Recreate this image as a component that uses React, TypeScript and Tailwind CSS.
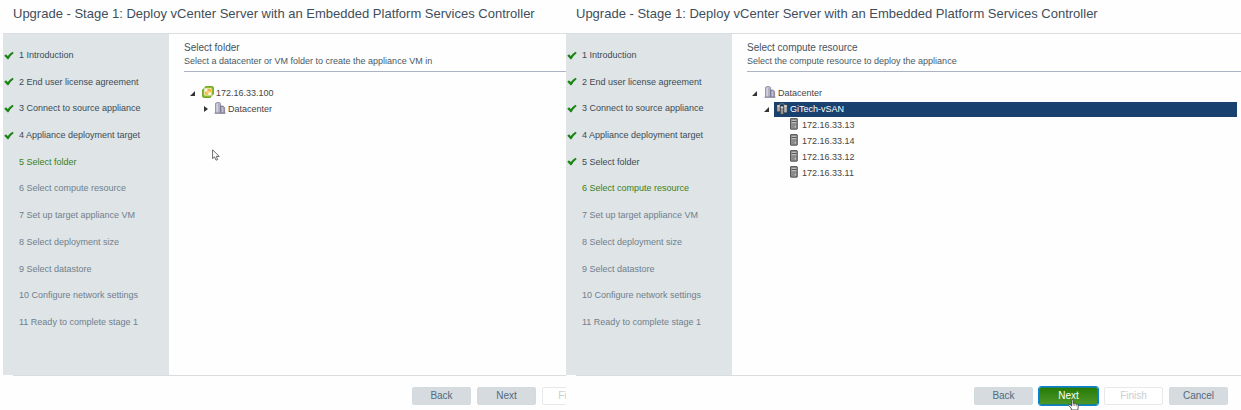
import React from 'react';
import clsx from 'clsx';

const steps = [
  'Introduction',
  'End user license agreement',
  'Connect to source appliance',
  'Appliance deployment target',
  'Select folder',
  'Select compute resource',
  'Set up target appliance VM',
  'Select deployment size',
  'Select datastore',
  'Configure network settings',
  'Ready to complete stage 1',
];

const hosts = ['172.16.33.13', '172.16.33.14', '172.16.33.12', '172.16.33.11'];

const CheckIcon = () => (
  <svg className="h-[9px] w-[10px] shrink-0" viewBox="0 0 20 18" aria-hidden="true">
    <path d="M0.5 9.5 L4 6.5 L7.5 10 Q11 5 17 1.5 L19.5 4 Q13 9 9 16.5 L7 16.5 Z" fill="#1d8516" />
  </svg>
);

const OpenArrow = () => (
  <svg className="h-[5px] w-[5px]" viewBox="0 0 5 5" aria-hidden="true">
    <path d="M5 0 V5 H0 Z" fill="#333" />
  </svg>
);

const ClosedArrow = () => (
  <svg className="ml-[2px] h-[6px] w-[5px]" viewBox="0 0 5 6" aria-hidden="true">
    <path d="M0 0 L4 3 L0 6 Z" fill="#333" />
  </svg>
);

const VCenterIcon = () => (
  <svg className="mb-[2px] h-3 w-3" viewBox="0 0 12 12" aria-hidden="true">
    <rect x="3" y="0.6" width="8.4" height="8.2" rx="1" fill="#8fbf35" stroke="#6fa023" />
    <rect x="0.6" y="3" width="8.4" height="8.4" rx="1" fill="#8abb2c" stroke="#6fa023" />
    <rect x="2.2" y="2.2" width="7.4" height="7.4" rx="0.8" fill="#fdf8e4" />
    <rect x="5.4" y="2.9" width="3.4" height="3.4" rx="0.6" fill="#f3ae2a" />
    <rect x="2.9" y="5.4" width="3.4" height="3.4" rx="0.6" fill="#f3b838" />
    <path d="M4.7 7.1 L7 4.7" stroke="#fff2c2" strokeWidth="0.8" />
  </svg>
);

const DatacenterIcon = () => (
  <svg className="mb-[2px] h-3 w-3" viewBox="0 0 12 12" aria-hidden="true">
    <path d="M1.5 11 V1.4 L2.5 0.6 H5.5 L6.5 1.4 V11 Z" fill="#bdbccf" stroke="#85849c" strokeWidth="0.8" />
    <path d="M6.5 11 V4 H9 L10.6 5.5 V11 Z" fill="#a3a2b8" stroke="#77768e" strokeWidth="0.8" />
    <path d="M3.2 2 V10.4" stroke="#e0dfeb" strokeWidth="0.9" />
    <path d="M5 2 V10.4" stroke="#a09fb6" strokeWidth="0.7" />
    <path d="M8.6 5.5 V10.4" stroke="#cfcede" strokeWidth="0.8" />
    <path d="M0.5 11.3 H11.5" stroke="#7d7c94" strokeWidth="0.8" />
  </svg>
);

const ClusterIcon = () => (
  <svg className="h-3 w-3" viewBox="0 0 12 12" aria-hidden="true">
    <rect x="0.9" y="1.8" width="3.2" height="7" fill="#a9a9a9" stroke="#2e2e2e" strokeWidth="0.5" />
    <rect x="7.9" y="1.8" width="3.2" height="8" fill="#b5b5b5" stroke="#2e2e2e" strokeWidth="0.5" />
    <rect x="4.4" y="3" width="3.2" height="8.2" fill="#969696" stroke="#2e2e2e" strokeWidth="0.5" />
    <path d="M1.4 3 H3.7 M8.3 3 H10.7 M4.8 4.3 H7.2" stroke="#f3f0e4" strokeWidth="1" />
    <path d="M3.6 1.4 L5.4 0.6 M6.6 0.6 L8.4 1.4" stroke="#c9b68d" strokeWidth="0.7" />
  </svg>
);

const HostIcon = () => (
  <svg className="mb-[2px] h-3 w-3" viewBox="0 0 12 12" aria-hidden="true">
    <rect x="2.5" y="0.6" width="6.8" height="10.6" rx="0.4" fill="#8b8b8b" stroke="#4b4b4b" strokeWidth="0.9" />
    <path d="M3.6 2.4 H8.2 M3.6 4.6 H8.2" stroke="#d0d0d0" strokeWidth="0.8" />
    <path d="M3.6 3.5 H8.2" stroke="#4c4c4c" strokeWidth="0.8" />
    <rect x="6.8" y="8.2" width="1.2" height="1.2" fill="#d8d8d8" />
  </svg>
);

type ButtonProps = {
  label: string;
  variant?: 'default' | 'primary' | 'disabled';
};

const WizardButton = ({ label, variant = 'default' }: ButtonProps) => (
  <button
    type="button"
    disabled={variant === 'disabled'}
    className={clsx(
      'h-[18px] w-[59px] shrink-0 rounded-[2px] border text-[10px] leading-4',
      variant === 'default' && 'border-[#d3dade] bg-[#d5dbdf] text-[#526a7d]',
      variant === 'primary' && 'border-[#1c7f8c] bg-linear-to-b from-[#267c04] to-[#4b9626] text-white outline outline-[#0a84d0]',
      variant === 'disabled' && 'border-[#e6e9eb] bg-white text-[#c8ced2]',
    )}
  >
    {label}
  </button>
);

const StepList = ({ current }: { current: number }) => (
  <nav className="flex w-[166px] shrink-0 flex-col bg-[#dfe4e6] pt-[13px] pb-[45px]">
    <ol className="flex flex-1 flex-col justify-between">
      {steps.map((step, i) => {
        const number = i + 1;
        return (
          <li
            key={step}
            className={clsx(
              'flex h-4 items-center gap-[5px] pl-px text-[9px] leading-4 whitespace-nowrap',
              number < current && 'text-[#3b4b57]',
              number === current && 'text-[#37801c]',
              number > current && 'text-[#6f808e]',
            )}
          >
            <span className="flex w-[10px] justify-center">{number < current && <CheckIcon />}</span>
            <a href="#">{number} {step}</a>
          </li>
        );
      })}
    </ol>
  </nav>
);

type TreeRowProps = {
  label: string;
  icon: React.ReactNode;
  arrow?: React.ReactNode;
  selected?: boolean;
};

const TreeRow = ({ label, icon, arrow, selected }: TreeRowProps) => (
  <div className="flex h-4 items-center">
    <span className="flex w-[10px] shrink-0 items-center">{arrow}</span>
    <span
      className={clsx(
        'flex h-[15px] flex-1 items-center gap-[2px] pl-[2px] text-[9px] leading-4',
        selected ? 'bg-[#19416f] text-white' : 'text-[#454545]',
      )}
    >
      {icon}
      {label}
    </span>
  </div>
);

type WizardProps = {
  current: number;
  title: string;
  description: string;
  footer: React.ReactNode;
  children: React.ReactNode;
};

const Wizard = ({ current, title, description, footer, children }: WizardProps) => (
  <section className="flex min-w-0 flex-col overflow-hidden">
    <header className="flex h-[34px] items-start border-b border-[#dcdfe1] pt-1 pl-[10px]">
      <h1 className="text-[13px] leading-5 whitespace-nowrap text-[#3f4e5b]">
        Upgrade - Stage 1: Deploy vCenter Server with an Embedded Platform Services Controller
      </h1>
    </header>
    <div className="flex flex-1">
      <StepList current={current} />
      <main className="min-w-0 flex-1 pt-[7px] pl-[15px]">
        <div className="border-b border-[#aab4c2] pb-1">
          <h2 className="text-[10px] leading-[14px] text-[#44535f]">{title}</h2>
          <p className="text-[9px] leading-3 text-[#4a5963]">{description}</p>
        </div>
        {children}
      </main>
    </div>
    <footer className="ml-[10px] flex h-[35px] justify-end border-t border-[#d9dddf] pt-[11px]">
      {footer}
    </footer>
  </section>
);

const App = () => {
  return (
    <div className="relative grid min-h-screen grid-cols-[563fr_675fr] overflow-hidden bg-[#fefefe] pl-[3px] font-['Liberation_Sans',Arial,sans-serif]">
      <Wizard
        current={5}
        title="Select folder"
        description="Select a datacenter or VM folder to create the appliance VM in"
        footer={
          <div className="-mr-[35px] flex gap-[6px]">
            <WizardButton label="Back" />
            <WizardButton label="Next" />
            <WizardButton label="Finish" variant="disabled" />
          </div>
        }
      >
        <div className="pt-[13px] pl-[6px]">
          <TreeRow label="172.16.33.100" icon={<VCenterIcon />} arrow={<OpenArrow />} />
          <div className="pl-3">
            <TreeRow label="Datacenter" icon={<DatacenterIcon />} arrow={<ClosedArrow />} />
          </div>
        </div>
      </Wizard>

      <Wizard
        current={6}
        title="Select compute resource"
        description="Select the compute resource to deploy the appliance"
        footer={
          <div className="mr-[13px] flex gap-[6px]">
            <WizardButton label="Back" />
            <WizardButton label="Next" variant="primary" />
            <WizardButton label="Finish" variant="disabled" />
            <WizardButton label="Cancel" />
          </div>
        }
      >
        <div className="pt-[13px] pr-1 pl-[5px]">
          <TreeRow label="Datacenter" icon={<DatacenterIcon />} arrow={<OpenArrow />} />
          <div className="pl-3">
            <TreeRow label="GiTech-vSAN" icon={<ClusterIcon />} arrow={<OpenArrow />} selected />
            <div className="pl-3">
              {hosts.map((host) => (
                <TreeRow key={host} label={host} icon={<HostIcon />} />
              ))}
            </div>
          </div>
        </div>
      </Wizard>

      {/* Mouse pointers */}
      <svg className="absolute top-[149px] left-[212px] h-3 w-2" viewBox="0 0 8 12" aria-hidden="true">
        <path d="M0.6 0.8 V9.6 L2.6 7.9 L4 11.2 L5.6 10.5 L4.3 7.4 H7.2 Z" fill="#fff" stroke="#444" strokeWidth="0.8" />
      </svg>
      <svg className="absolute right-[162px] bottom-0 h-[11px] w-[11px]" viewBox="0 0 11 11" aria-hidden="true">
        <path
          d="M3.6 11 L3 9 L0.6 6.4 Q0.8 5 2 5.6 L3.6 7 V1.4 Q4.4 0.2 5.2 1.4 V4.4 Q6.2 3.8 6.8 4.8 Q7.8 4.2 8.4 5.2 Q9.8 4.8 10.2 6 V9 L9.6 11 Z"
          fill="#fff"
          stroke="#333"
          strokeWidth="0.8"
        />
        <path d="M5.2 4.4 V6.8 M6.8 4.8 V7 M8.4 5.2 V7.2" stroke="#555" strokeWidth="0.6" />
      </svg>
    </div>
  );
};

export default App;
